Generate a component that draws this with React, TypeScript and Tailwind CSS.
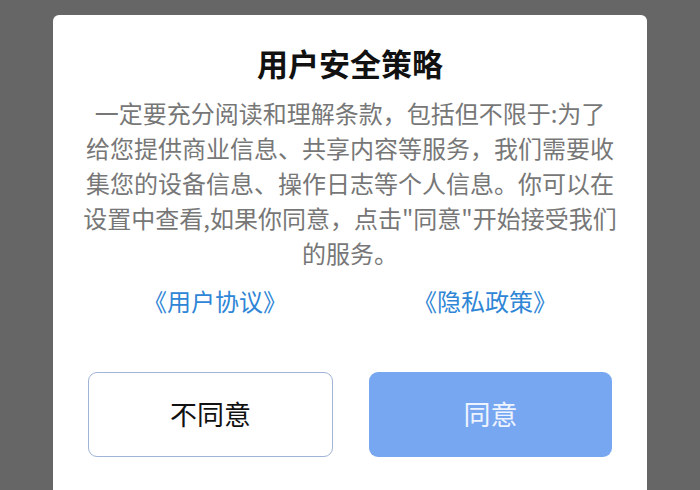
export default function App() {
  const font = { fontFamily: '"Noto Sans CJK SC", "Noto Sans", sans-serif' };

  return (
    <div className="w-[700px] h-[490px] bg-[#666666] overflow-hidden pt-[15px] pl-[53px]" style={font}>
      <div className="w-[594px] h-[500px] bg-white rounded-t-[6px] flex flex-col items-center">
        {/* 标题 */}
        <h1 className="mt-[28px] text-[31px] leading-[40px] font-bold text-[#111]">用户安全策略</h1>

        {/* 正文 */}
        <p className="mt-[12px] w-[560px] text-center text-[24px] leading-[35px] text-[#777]">
          一定要充分阅读和理解条款，包括但不限于:为了
          <br />
          给您提供商业信息、共享内容等服务，我们需要收
          <br />
          集您的设备信息、操作日志等个人信息。你可以在
          <br />
          设置中查看,如果你同意，点击"同意"开始接受我们
          <br />
          的服务。
        </p>

        {/* 协议链接 */}
        <div className="mt-[16px] w-full px-[27px] flex">
          <a className="flex-1 text-center text-[24px] leading-[30px] text-[#2f86d6]">《用户协议》</a>
          <a className="flex-1 text-center text-[24px] leading-[30px] text-[#2f86d6]">《隐私政策》</a>
        </div>

        {/* 按钮 */}
        <div className="mt-[56px] w-full px-[35px] flex gap-[36px]">
          <button className="flex-1 h-[85px] rounded-[9px] border border-[#9fb4d6] bg-white text-[27px] text-[#111]">
            不同意
          </button>
          <button className="flex-1 h-[85px] rounded-[9px] bg-[#78a7f2] text-[27px] text-[#eef4ff]">
            同意
          </button>
        </div>
      </div>
    </div>
  );
}
